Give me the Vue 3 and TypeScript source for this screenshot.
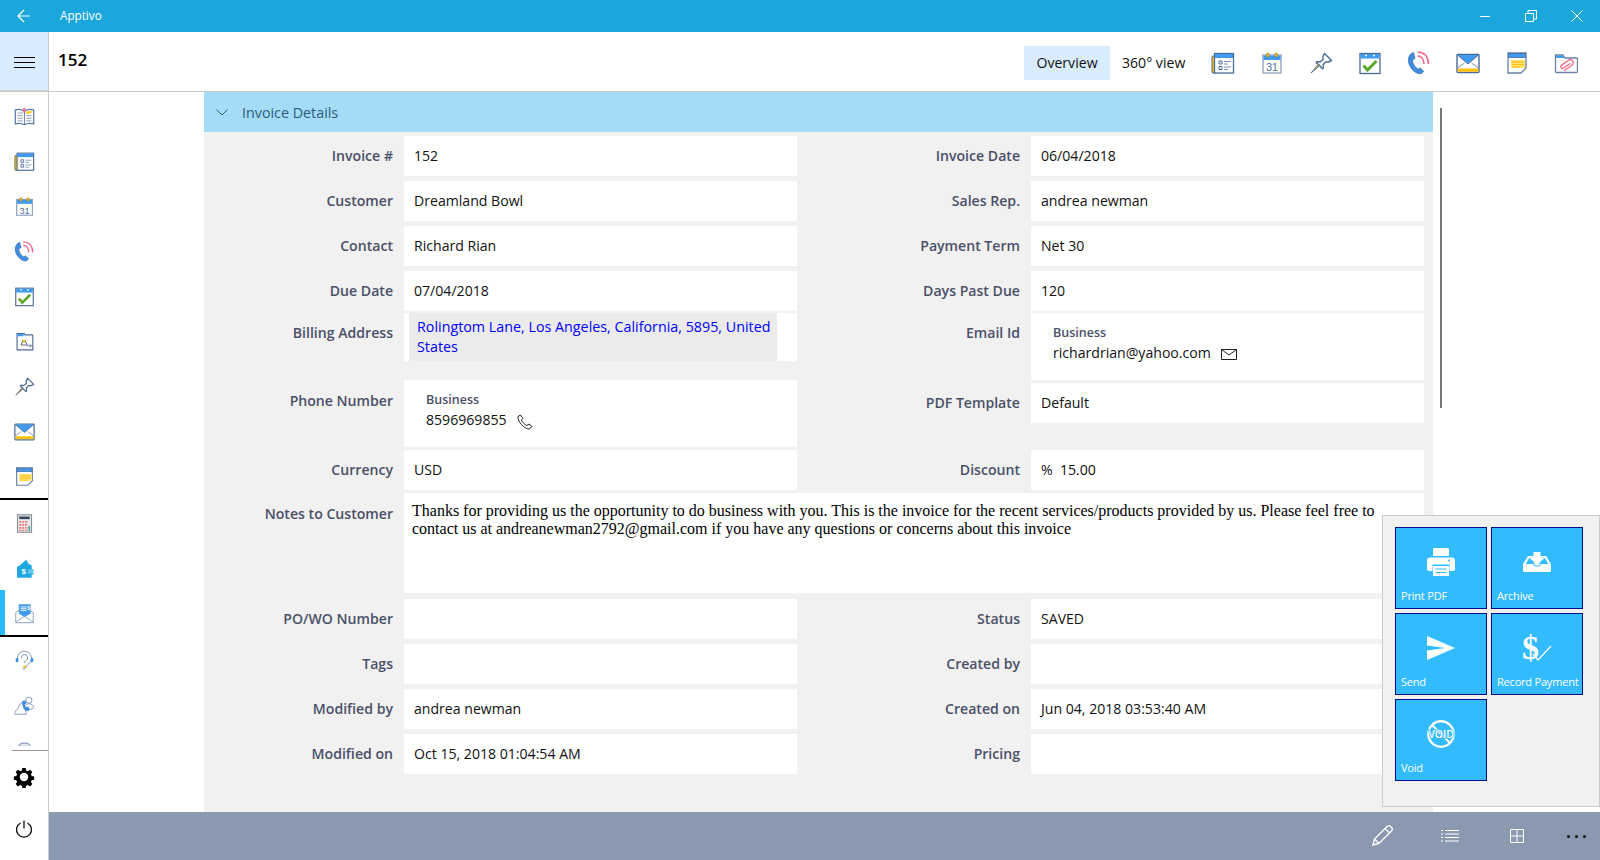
<script setup lang="ts">
interface Field { label: string; value?: string; kind?: 'text' | 'link' | 'email' | 'phone' }
interface Row { cls: string; left: Field; right?: Field }

const topIcons = ['agenda', 'cal', 'pin', 'task', 'call', 'mail', 'note', 'attach']
const navA = ['book', 'agenda', 'cal', 'call', 'task', 'folder', 'pin', 'mail', 'note']
const navB = ['calc', 'wallet', 'invoice']
const navC = ['help', 'people', 'last']

const rows: Row[] = [
  { cls: 'first', left: { label: 'Invoice #', value: '152' }, right: { label: 'Invoice Date', value: '06/04/2018' } },
  { cls: '', left: { label: 'Customer', value: 'Dreamland Bowl' }, right: { label: 'Sales Rep.', value: 'andrea newman' } },
  { cls: '', left: { label: 'Contact', value: 'Richard Rian' }, right: { label: 'Payment Term', value: 'Net 30' } },
  { cls: '', left: { label: 'Due Date', value: '07/04/2018' }, right: { label: 'Days Past Due', value: '120' } },
  { cls: 'tall', left: { label: 'Billing Address', kind: 'link', value: 'Rolingtom Lane, Los Angeles, California, 5895, United States' }, right: { label: 'Email Id', kind: 'email', value: 'richardrian@yahoo.com' } },
  { cls: 'tall2', left: { label: 'Phone Number', kind: 'phone', value: '8596969855' }, right: { label: 'PDF Template', value: 'Default' } },
  { cls: 'after', left: { label: 'Currency', value: 'USD' }, right: { label: 'Discount', value: '%  15.00' } },
]
const rowsB: Row[] = [
  { cls: 'po', left: { label: 'PO/WO Number', value: '' }, right: { label: 'Status', value: 'SAVED' } },
  { cls: '', left: { label: 'Tags', value: '' }, right: { label: 'Created by', value: '' } },
  { cls: '', left: { label: 'Modified by', value: 'andrea newman' }, right: { label: 'Created on', value: 'Jun 04, 2018 03:53:40 AM' } },
  { cls: '', left: { label: 'Modified on', value: 'Oct 15, 2018 01:04:54 AM' }, right: { label: 'Pricing', value: '' } },
]
const notes = 'Thanks for providing us the opportunity to do business with you. This is the invoice for the recent services/products provided by us. Please feel free to contact us at andreanewman2792@gmail.com if you have any questions or concerns about this invoice'
const tiles = [
  { id: 'print', label: 'Print PDF' },
  { id: 'archive', label: 'Archive' },
  { id: 'send', label: 'Send' },
  { id: 'pay', label: 'Record Payment' },
  { id: 'void', label: 'Void' },
]
</script>

<template>
  <div class="app">
    <svg class="defs" aria-hidden="true">
      <symbol id="i-book" viewBox="0 0 24 24"><path d="M12 6C9 3.500 5 3.500 1.500 4.500V20.500c3.500-1 7.500-1 10.500 1 3-2 7-2 10.500-1V4.500C19 3.500 15 3.500 12 6z" fill="#fff" stroke="#5b7aa5" stroke-width="1.400"/><path d="M12 6v15" stroke="#5b7aa5"/><path d="M4 8h6M4 11h6M4 14h6M4 17h6M14 11h6M14 14h6M14 17h6" stroke="#7b93b8"/><path d="M14 6.500l6-1.500v3l-6 1z" fill="#ffc918"/><path d="M10.500 2h2.500v6l-1.200-1.500-1.300 1.500z" fill="#f66a85"/></symbol>
      <symbol id="i-agenda" viewBox="0 0 24 24"><rect x="1" y="5" width="4" height="17" rx="1" fill="#ffc107" stroke="#4a6a96"/><rect x="3.500" y="2.500" width="19" height="19.500" fill="#fff" stroke="#4a6a96" stroke-width="1.300"/><rect x="4" y="3" width="18" height="4" fill="#3f9bef"/><path d="M8 10h3v3H8zM8 15.500h3v3H8z" fill="none" stroke="#4a6a96"/><path d="M13 10.500h7M13 13h4M13 16h7M13 18.500h4" stroke="#7b93b8"/></symbol>
      <symbol id="i-cal" viewBox="0 0 24 24"><rect x="3" y="4" width="18" height="18" fill="#fff" stroke="#8ba0be" stroke-width="1.300"/><rect x="3.500" y="4.500" width="17" height="4.500" fill="#3f9bef"/><rect x="6.500" y="2" width="2.500" height="4" rx="1" fill="#ffc107" stroke="#806a20" stroke-width=".5"/><rect x="15" y="2" width="2.500" height="4" rx="1" fill="#ffc107" stroke="#806a20" stroke-width=".5"/><text x="12" y="20" text-anchor="middle" font-size="10.500" fill="#4a6a96" font-family="Liberation Sans, sans-serif">31</text></symbol>
      <symbol id="i-pin" viewBox="0 0 24 24"><path d="M15.500 2.500l7 7-3 1.500-3 0-2.500 3 .5 2.800-1 1-3-3.300-3.300-3 1-1 2.800.5 3-2.500 0-3z" fill="#fff" stroke="#4a6a96" stroke-width="1.400" stroke-linejoin="round"/><path d="M9.500 13L2 22l9-7.500z" fill="#c9a43a" stroke="#4a6a96" stroke-width=".8"/></symbol>
      <symbol id="i-task" viewBox="0 0 24 24"><rect x="2" y="2.500" width="20" height="20" fill="#fff" stroke="#4a6a96" stroke-width="1.300"/><rect x="2.500" y="3" width="19" height="4.500" fill="#3f9bef"/><path d="M7 4.500h2M15 4.500h2" stroke="#fff" stroke-width="1.400"/><path d="M5.500 14.500l4 4.500 9-9" fill="none" stroke="#5fa92f" stroke-width="3"/></symbol>
      <symbol id="i-call" viewBox="0 0 24 24"><path d="M6.500 1.500C3 2.500 1 6 1.500 10.500 2 16 7 22 12.500 22.800c2 .2 3.500-1 4-2.800l-3.700-3.200-1.300 1.500c-3-1-6.500-6.500-6-9.500l2.500-1.200z" fill="#3f8de0" stroke="#2f6aa8" stroke-width=".7"/><path d="M10.500 1c6.500 0 10.500 4.500 11 12" fill="none" stroke="#f66a85" stroke-width="1.600"/><path d="M10.500 5c3.800 0 6.200 3 6.500 8" fill="none" stroke="#f66a85" stroke-width="1.600"/></symbol>
      <symbol id="i-folder" viewBox="0 0 24 24"><path d="M3.500 3h8l1 1.500h8a1 1 0 0 1 1 1V21.500h-18z" fill="#fff" stroke="#4a6a96" stroke-width="1.300"/><path d="M4 3.500h7V6H4z" fill="#3f9bef"/><path d="M8 16h7l-1-2.500-1-.5v-2h-3v2l-1 .5z" fill="#fff" stroke="#4a5068"/><circle cx="11.500" cy="11.500" r="1.500" fill="#ffc107"/><path d="M15 17h5m-2-2l2 2-2 2" fill="none" stroke="#4a6a96" stroke-width=".9"/></symbol>
      <symbol id="i-mail" viewBox="0 0 24 24"><rect x="1" y="3.500" width="22" height="18" rx="1" fill="#fff" stroke="#4a6a96" stroke-width="1.400"/><path d="M1.500 4h21L12 13z" fill="#3f9bef"/><path d="M1.500 4L12 13 22.500 4" fill="none" stroke="#4a6a96" stroke-width=".9"/><path d="M1.500 17l7-5M22.500 17l-7-5" stroke="#7b93b8"/><rect x="1.700" y="17.500" width="20.600" height="3.200" fill="#ffc107"/></symbol>
      <symbol id="i-note" viewBox="0 0 24 24"><path d="M3 2h18v15l-5 5H3z" fill="#fff" stroke="#6882a8" stroke-width="1.300"/><rect x="3.500" y="2.500" width="17" height="4" fill="#3f9bef" stroke="#4a6a96" stroke-width=".8"/><rect x="6" y="9" width="14" height="8" fill="#ffdf70"/><path d="M7 11h12M7 13.500h12M7 16h8" stroke="#ffc107"/></symbol>
      <symbol id="i-attach" viewBox="0 0 24 24"><path d="M1.500 4h7.500l2 3h11.500a1 1 0 0 1 1 1v12.500a1 1 0 0 1-1 1H2.500a1 1 0 0 1-1-1z" fill="#fff" stroke="#6882a8" stroke-width="1.300"/><path d="M2 4.500h6.500L10 7H2z" fill="#3f9bef"/><g transform="rotate(-35 13 14)"><path d="M8 17h9a3 3 0 0 0 0-6H8.500a1.800 1.800 0 0 0 0 3.600H16" fill="none" stroke="#f66a85" stroke-width="1.300" stroke-linecap="round"/></g></symbol>
      <symbol id="i-calc" viewBox="0 0 24 24"><rect x="4" y="2" width="16" height="20" fill="#e9e9e9" stroke="#8a8f96" stroke-width="1.300"/><rect x="6" y="4" width="12" height="3" fill="#34495e"/><path d="M6 9h10v2H6zM6 12.500h10v2H6zM6 16h10v2H6zM6 19h10v1.500H6z" fill="#f07a78"/><path d="M9 8.500v12.500M12 8.500v12.500M15 8.500v12.500" stroke="#e9e9e9"/><rect x="16.500" y="15" width="1.800" height="5.500" fill="#3fa796"/></symbol>
      <symbol id="i-wallet" viewBox="0 0 24 24"><path d="M3.500 11L14 2l3 5 3 1v5h2v6h-2v3H3.500z" fill="#1ea8e0"/><path d="M3.500 9.500h16.500v13H3.500z" fill="#1ea8e0"/><text x="11" y="18.500" text-anchor="middle" font-size="9" font-weight="700" fill="#fff" font-family="Liberation Sans, sans-serif">$</text><path d="M16 13h6v5h-6z" fill="#62c6ee"/></symbol>
      <symbol id="i-invoice" viewBox="0 0 24 24"><path d="M2 11l10-7 10 7v11.500H2z" fill="#fff" stroke="#8ba0be" stroke-width="1.100"/><path d="M5.500 1.500h13.500V12l-7 4-6.500-4z" fill="#3f9bef"/><path d="M7.500 4.500h7M7.500 6.500h7M7.500 8.500h7" stroke="#fff"/><text x="16.700" y="8.500" text-anchor="middle" font-size="6" font-weight="700" fill="#fff" font-family="Liberation Sans, sans-serif">$</text><path d="M2.200 21.800L12 15l9.800 6.800" fill="none" stroke="#8ba0be"/></symbol>
      <symbol id="i-help" viewBox="0 0 24 24"><path d="M4 10C4 4 8 1.500 12 1.500S20 4.500 20 10c0 6-5 5-6 9-.5 2-2 3-4 2.500" fill="none" stroke="#6882a8"/><path d="M8.500 9c0-5 7-5 7 0 0 3-3.500 3-3.500 6" fill="none" stroke="#6882a8" stroke-width="1.100"/><rect x="2" y="9" width="3" height="5" rx="1.500" fill="#3f8de0"/><rect x="19" y="9" width="3" height="5" rx="1.500" fill="#3f8de0"/><circle cx="12" cy="19" r="1.500" fill="#ffc107"/></symbol>
      <symbol id="i-people" viewBox="0 0 24 24"><circle cx="17" cy="6" r="3.500" fill="#fff" stroke="#7b93b8"/><path d="M12 14c1-3 3-4 5-4 3 0 5 1.500 5.500 4.500-2 2-4 2-6 2z" fill="#fff" stroke="#7b93b8"/><path d="M7 10c2-2 5-1 5 2l-1 3c2 1.500 3 4 3 7H1c0-3 1-5 4-6.500z" fill="#fff" stroke="#7b93b8"/><path d="M9 7l4-1 1 4-2 1 1.500 3 3-1 1.500 4-3 1.500c-4-1-6.500-7-5.500-13z" fill="#3f8de0"/></symbol>
      <symbol id="i-last" viewBox="0 0 24 24"><path d="M5.500 7C6.500 2.500 17.500 2.500 18.500 7" fill="none" stroke="#8ba0be" stroke-width="1.300"/><path d="M8 6h8" stroke="#b5c3d6"/></symbol>
      <symbol id="i-print" viewBox="0 0 28 28"><path d="M6 1.500a1.500 1.500 0 0 1 1.500-1.500h13A1.500 1.500 0 0 1 22 1.500V8H6z" fill="#fff"/><path d="M3 9.500h22a3 3 0 0 1 3 3V21a2 2 0 0 1-2 2h-3.500v-6.500h-17V23H2a2 2 0 0 1-2-2v-8.500a3 3 0 0 1 3-3z" fill="#fff"/><path d="M6 18h16v10H6z" fill="#fff"/><path d="M8.500 21h11M8.500 24.500h11" stroke="#33bbff" stroke-width="1.200"/><circle cx="22" cy="12.500" r="1" fill="#33bbff"/></symbol>
      <symbol id="i-archive" viewBox="0 0 28 20"><path d="M5 4L0 12v6.500A1.500 1.500 0 0 0 1.500 20h25a1.500 1.500 0 0 0 1.500-1.500V12L23 4z" fill="#fff"/><path d="M6.500 5.500L3 11.500h22L21.500 5.500z" fill="#33bbff"/><path d="M3 11.500h7l1.500 2.500h5L18 11.500h7" fill="none" stroke="#33bbff"/><path d="M10.500 0h7v5.500h4.500L14 13 6 5.500h4.500z" fill="#fff"/></symbol>
      <symbol id="i-send" viewBox="0 0 28 24"><path d="M0 0l28 12L0 24V14.500L18 12 0 9.500z" fill="#fff"/></symbol>
      <symbol id="i-pay" viewBox="0 0 30 28"><text x="8.500" y="24.500" text-anchor="middle" font-size="34" font-weight="700" fill="#fff" font-family="Liberation Serif, serif">$</text><path d="M11 20l5 6 13-14" fill="none" stroke="#fff" stroke-width="1.200"/></symbol>
      <symbol id="i-void" viewBox="0 0 28 28"><circle cx="14" cy="14" r="12.700" fill="none" stroke="#fff" stroke-width="2.400"/><path d="M5 5l18 18" stroke="#fff" stroke-width="2"/><text x="14" y="18" text-anchor="middle" font-size="10.500" font-weight="600" fill="#fff" stroke="#33bbff" stroke-width="1.500" paint-order="stroke" font-family="Open Sans, sans-serif">VOID</text></symbol>
    </svg>

    <header class="titlebar">
      <svg class="back" viewBox="0 0 14 14" width="14" height="14"><path d="M13 7H1.500M7 1L1 7l6 6" fill="none" stroke="#fff" stroke-width="1.200"/></svg>
      <span class="app-name">Apptivo</span>
      <span class="win-btns">
        <svg viewBox="0 0 12 12" width="12" height="12"><path d="M1 6.500h10" stroke="#fff"/></svg>
        <svg viewBox="0 0 12 12" width="12" height="12"><path d="M.5 3.500h8v8h-8zM3 3.500V.5h8.500V9H8.500" fill="none" stroke="#fff"/></svg>
        <svg viewBox="0 0 12 12" width="12" height="12"><path d="M.5.500l11 11M11.500.5l-11 11" stroke="#fff"/></svg>
      </span>
    </header>

    <div class="shell">
      <aside class="nav">
        <div class="burger"><span></span><span></span><span></span></div>
        <div class="nav-scroll">
          <div v-for="n in navA" :key="n" class="nav-item"><svg class="ni"><use :href="'#i-' + n" /></svg></div>
          <div class="nav-sep"></div>
          <div v-for="n in navB" :key="n" class="nav-item" :class="{ sel: n === 'invoice' }"><svg class="ni"><use :href="'#i-' + n" /></svg></div>
          <div class="nav-sep"></div>
          <div v-for="n in navC" :key="n" class="nav-item"><svg class="ni"><use :href="'#i-' + n" /></svg></div>
        </div>
        <div class="nav-bottom">
          <div class="gear">
            <svg viewBox="0 0 24 24" width="22" height="22"><path d="M10 1h4l.6 3 2.100.9 2.600-1.700 2.800 2.800-1.700 2.600.9 2.100 3 .6v4l-3 .6-.9 2.100 1.700 2.600-2.800 2.800-2.600-1.700-2.100.9-.6 3h-4l-.6-3-2.100-.9-2.600 1.700-2.800-2.800 1.700-2.600-.9-2.100-3-.6v-4l3-.6.9-2.100-1.700-2.600 2.800-2.800 2.600 1.700 2.100-.9z" transform="translate(1.200 1.200) scale(.9)" fill="#000"/><circle cx="12" cy="12" r="4.600" fill="#fff"/></svg>
          </div>
          <div class="power">
            <svg viewBox="0 0 18 18" width="18" height="18"><path d="M5.500 3a7.500 7.500 0 1 0 7 0M9 0.500v8" fill="none" stroke="#111" stroke-width="1.300"/></svg>
          </div>
        </div>
      </aside>

      <main class="main">
        <div class="head">
          <h1 class="record">152</h1>
          <div class="tabs">
            <span class="tab on">Overview</span>
            <span class="tab two">360° view</span>
          </div>
          <div class="tools">
            <svg v-for="t in topIcons" :key="t" class="ti"><use :href="'#i-' + t" /></svg>
          </div>
        </div>

        <div class="body">
          <section class="panel">
            <div class="panel-head">
              <svg viewBox="0 0 12 7" width="12" height="7"><path d="M.5.500L6 6 11.500.5" fill="none" stroke="#2c5a78"/></svg>
              <span>Invoice Details</span>
            </div>

            <div v-for="r in rows" :key="r.left.label" class="row" :class="r.cls">
              <div v-for="f in [r.left, r.right]" :key="f!.label" class="field">
                <label class="lbl">{{ f!.label }}</label>
                <div v-if="f!.kind === 'link'" class="val val-link"><a class="addr">{{ f!.value }}</a></div>
                <div v-else-if="f!.kind === 'email'" class="val val-multi">
                  <div class="sub">Business</div>
                  <div class="sub-val">{{ f!.value }}
                    <svg class="mini" viewBox="0 0 16 11" width="16" height="11"><path d="M.5.500h15v10H.5zM.5.500L8 6l7.500-5.500" fill="none" stroke="#222"/></svg>
                  </div>
                </div>
                <div v-else-if="f!.kind === 'phone'" class="val val-multi">
                  <div class="sub">Business</div>
                  <div class="sub-val">{{ f!.value }}
                    <svg class="mini tel" viewBox="0 0 16 16" width="16" height="16"><path d="M3.500 1L1 2.500c-.5 5 6 12.500 11.500 12.500L15 12.500l-3-2.500-2 1.500C8 11 5 8 4.500 6L6 4.500z" fill="none" stroke="#222"/></svg>
                  </div>
                </div>
                <div v-else class="val">{{ f!.value }}</div>
              </div>
            </div>

            <div class="field notes-row">
              <label class="lbl">Notes to Customer</label>
              <div class="notes">{{ notes }}</div>
            </div>

            <div v-for="r in rowsB" :key="r.left.label" class="row" :class="r.cls">
              <div v-for="f in [r.left, r.right]" :key="f!.label" class="field">
                <label class="lbl">{{ f!.label }}</label>
                <div class="val">{{ f!.value }}</div>
              </div>
            </div>
          </section>
          <div class="scrollbar"></div>
        </div>

        <footer class="bar">
          <svg class="bar-i" viewBox="0 0 24 24" width="24" height="24"><path d="M3 21l1.500-6L17 2.500a2.500 2.500 0 0 1 3.500 0l1 1a2.500 2.500 0 0 1 0 3.500L9 19.500zM4.500 15L9 19.500M15 4.500L19.500 9" fill="none" stroke="#fff" stroke-width="1.300"/></svg>
          <svg class="bar-i" viewBox="0 0 18 14" width="18" height="14"><path d="M4 1.500h14M4 5h14M4 8.500h14M4 12h14M0 1.500h2M0 5h2M0 8.500h2M0 12h2" stroke="#fff"/></svg>
          <svg class="bar-i" viewBox="0 0 14 14" width="14" height="14"><path d="M.5.500h13v13H.5zM7 .5v13M.5 7h13" fill="none" stroke="#fff"/></svg>
          <span class="dots"><i></i><i></i><i></i></span>
        </footer>
      </main>
    </div>

    <div class="actions">
      <div v-for="t in tiles" :key="t.id" class="tile" :class="t.id">
        <svg class="tile-i"><use :href="'#i-' + t.id" /></svg>
        <span>{{ t.label }}</span>
      </div>
    </div>
  </div>
</template>

<style>
html, body { margin: 0; background: #fff; }
</style>

<style scoped>
.app {
  position: relative;
  width: 1600px;
  height: 860px;
  overflow: hidden;
  display: flex;
  flex-direction: column;
  font-family: "Open Sans", "Noto Sans", sans-serif;
  font-size: 14.100px;
  color: #111;
  background: #fff;
}
.defs { display: none; }
.titlebar {
  height: 32px;
  flex: none;
  background: #1ba7dc;
  display: flex;
  align-items: center;
  padding-left: 17px;
  color: #fff;
}
.app-name { margin: -2px 0 0 29px; font-size: 11.700px; }
.win-btns { margin-left: auto; display: flex; gap: 34px; padding-right: 17px; }
.shell { flex: 1; display: flex; min-height: 0; }
.nav {
  width: 48px;
  flex: none;
  border-right: 1px solid #ccc;
  display: flex;
  flex-direction: column;
}
.burger {
  height: 60px;
  flex: none;
  box-sizing: border-box;
  background: #d9ecfe;
  border-bottom: 2px solid #ccc;
  padding-top: 2px;
  display: flex;
  flex-direction: column;
  justify-content: center;
  align-items: center;
  gap: 4px;
}
.burger span { width: 21px; height: 1px; background: #000; }
.nav-scroll { height: 658px; padding-top: 1px; box-sizing: border-box; overflow: hidden; flex: none; }
.nav-item {
  height: 45px;
  display: flex;
  align-items: center;
  justify-content: center;
  box-sizing: border-box;
  padding-top: 1px;
}
.nav-item.sel { box-shadow: inset 5px 0 0 #29bbff; }
.ni { width: 21px; height: 21px; }
.nav-sep { height: 2px; background: #000; }
.nav-bottom { flex: 1; display: flex; flex-direction: column; border-top: 1px solid #999; margin-left: 12px; }
.gear { height: 51px; margin-left: -12px; display: flex; align-items: center; justify-content: center; }
.power { height: 54px; margin-left: -12px; display: flex; align-items: center; justify-content: center; }
.main { flex: 1; display: flex; flex-direction: column; min-width: 0; }
.head {
  height: 60px;
  flex: none;
  box-sizing: border-box;
  border-bottom: 1px solid #ccc;
  display: flex;
  align-items: center;
  padding-left: 9px;
}
.record { font-size: 17px; font-weight: 600; margin: -4px 0 0; color: #000; }
.tabs { margin-left: auto; display: flex; margin-top: 3px; }
.tab { height: 34px; line-height: 34px; padding: 0 12px; white-space: nowrap; }
.tab.on { background: #d9ecfe; width: 62px; text-align: center; }
.tab.two { width: 64px; }
.tools { display: flex; gap: 25px; margin: 2px 22px 0 13px; }
.ti { width: 24px; height: 24px; display: block; }
.body { flex: 1; min-height: 0; padding-left: 155px; display: flex; }
.panel {
  width: 1229px;
  background: #f1f1f1;
}
.panel-head {
  height: 40px;
  background: #a4dcf8;
  display: flex;
  align-items: center;
  padding-left: 12px;
  gap: 14px;
  color: #2c5a78;
  font-size: 14.300px;
}
.row { display: flex; margin-top: 5px; }
.row.first { margin-top: 4px; }
.field { display: flex; align-items: stretch; }
.lbl {
  width: 200px;
  box-sizing: border-box;
  flex: none;
  padding: 0 11px 0 0;
  text-align: right;
  font-weight: 600;
  color: #4a5068;
  line-height: 40px;
  white-space: nowrap;
}
.field + .field .lbl { width: 234px; }
.val {
  width: 393px;
  height: 40px;
  line-height: 40px;
  background: #fff;
  padding-left: 10px;
  box-sizing: border-box;
  color: #111;
  white-space: pre;
}
.row.tall { margin-top: 2px; height: 67px; }
.row.tall2 { height: 67px; margin-top: 0; }
.row.tall2 .field:first-child .lbl { line-height: 41px; }
.row.tall2 .field + .field { padding-top: 3px; }
.row.after { margin-top: 3px; }
.val-link { height: 48px; padding: 0 20px 0 5px; line-height: 20px; white-space: normal; }
.addr { display: block; height: 48px; box-sizing: border-box; background: #ebebeb; color: #0000ff; padding: 4px 0 0 8px; font-size: 14.300px; }
.val-multi { height: 67px; line-height: 20px; padding: 10px 0 0 22px; white-space: normal; }
.sub { font-size: 12.500px; font-weight: 600; color: #4a5068; }
.sub-val { display: flex; align-items: center; }
.mini { margin: 3px 0 0 10px; }
.notes-row { margin-top: 3px; }
.notes-row .lbl { line-height: 41px; }
.notes {
  width: 1020px;
  height: 100px;
  box-sizing: border-box;
  background: #fff;
  padding: 9px 30px 0 8px;
  font-family: "Liberation Serif", serif;
  font-size: 16px;
  line-height: 18px;
  color: #000;
}
.row.po { margin-top: 6px; }
.scrollbar { width: 2px; height: 300px; background: #777; margin: 16px 0 0 7px; }
.bar {
  height: 48px;
  flex: none;
  background: #8a99af;
  display: flex;
  align-items: center;
}
.bar-i { flex: none; }
.bar-i:nth-child(1) { margin-left: 1321px; }
.bar-i:nth-child(2) { margin-left: 47px; }
.bar-i:nth-child(3) { margin-left: 51px; }
.dots { display: flex; gap: 5px; margin-left: 43px; }
.dots i { width: 3px; height: 3px; background: #111; border-radius: 50%; }
.actions {
  position: absolute;
  left: 1382px;
  top: 515px;
  width: 218px;
  height: 292px;
  box-sizing: border-box;
  background: #f1f1f1;
  border: 1px solid #ccc;
  padding: 11px 12px;
  display: grid;
  grid-template-columns: 92px 92px;
  grid-auto-rows: 82px;
  gap: 4px;
  align-content: start;
}
.tile {
  box-sizing: border-box;
  background: #33bbff;
  border: 1px solid #000d8a;
  color: #fff;
  display: flex;
  flex-direction: column;
  align-items: center;
  font-size: 11px;
  line-height: 14px;
}
.tile span { align-self: flex-start; margin-top: auto; margin-bottom: 5px; padding-left: 5px; white-space: nowrap; letter-spacing: -.2px; }
.tile-i { margin-top: 20px; width: 28px; height: 28px; }
.archive .tile-i { height: 20px; margin-top: 24px; }
.send .tile-i { height: 24px; margin-top: 22px; }
.pay .tile-i { margin-top: 20px; width: 30px; }
</style>
